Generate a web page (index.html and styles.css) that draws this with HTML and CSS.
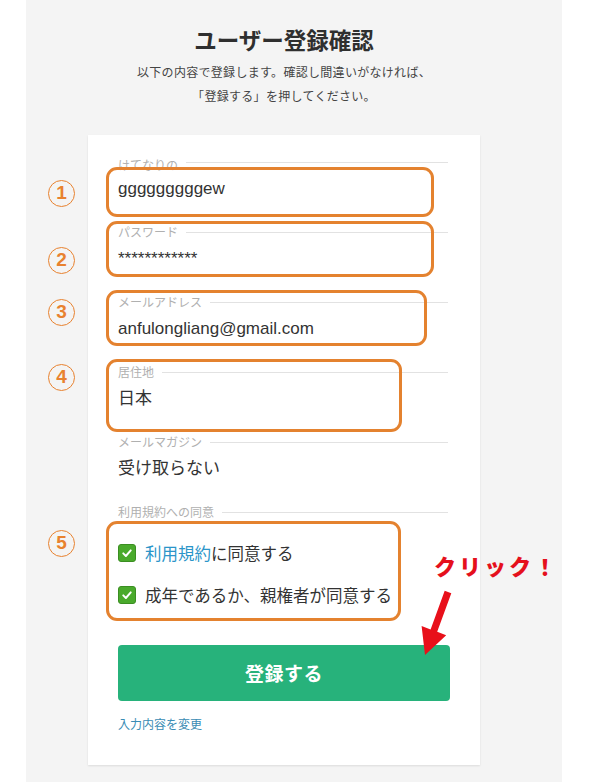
FILE: index.html
```html
<!DOCTYPE html>
<html lang="ja">
<head>
<meta charset="utf-8">
<title>ユーザー登録確認</title>
<link rel="stylesheet" href="styles.css">
</head>
<body>
<div class="panel">
  <div class="column">
    <header class="head">
      <h1 class="title">ユーザー登録確認</h1>
      <p class="lead">以下の内容で登録します。確認し間違いがなければ、<br>「登録する」を押してください。</p>
    </header>
    <main class="card">
      <div class="field">
        <div class="label low"><span>けてなりの</span></div>
        <div class="value">gggggggggew</div>
      </div>
      <div class="field">
        <div class="label"><span>パスワード</span></div>
        <div class="value">************</div>
      </div>
      <div class="field">
        <div class="label"><span>メールアドレス</span></div>
        <div class="value">anfulongliang@gmail.com</div>
      </div>
      <div class="field">
        <div class="label"><span>居住地</span></div>
        <div class="value">日本</div>
      </div>
      <div class="field">
        <div class="label"><span>メールマガジン</span></div>
        <div class="value">受け取らない</div>
      </div>
      <div class="field field-last">
        <div class="label"><span>利用規約への同意</span></div>
        <ul class="checks">
          <li class="check-row"><span class="checkbox"><svg viewBox="0 0 16 16" width="12" height="12"><path d="M3 8.5 L6.5 12 L13 4.5" fill="none" stroke="#fff" stroke-width="2.6" stroke-linecap="round" stroke-linejoin="round"/></svg></span><span><a class="link-blue" href="#">利用規約</a>に同意する</span></li>
          <li class="check-row"><span class="checkbox"><svg viewBox="0 0 16 16" width="12" height="12"><path d="M3 8.5 L6.5 12 L13 4.5" fill="none" stroke="#fff" stroke-width="2.6" stroke-linecap="round" stroke-linejoin="round"/></svg></span><span>成年であるか、親権者が同意する</span></li>
        </ul>
      </div>
      <button class="submit" type="button">登録する</button>
      <a class="back" href="#">入力内容を変更</a>
    </main>
  </div>
</div>

<div class="annot">
  <div class="abox b1"></div>
  <div class="abox b2"></div>
  <div class="abox b3"></div>
  <div class="abox b4"></div>
  <div class="abox b5"></div>
  <span class="num n1">1</span>
  <span class="num n2">2</span>
  <span class="num n3">3</span>
  <span class="num n4">4</span>
  <span class="num n5">5</span>
  <span class="click">クリック！</span>
  <svg class="arrow" width="601" height="782" viewBox="0 0 601 782">
    <polygon points="444.7,590.8 451.3,593.2 437.2,631.8 446.2,635.2 425,655 421.6,626.0 430.6,629.4" fill="#e8101a"/>
  </svg>
</div>
</body>
</html>
```

FILE: styles.css
```css
* { box-sizing: border-box; }
html, body { margin: 0; padding: 0; }
body {
  position: relative;
  background: #ffffff;
  font-family: "Noto Sans CJK JP", "Liberation Sans", sans-serif;
  color: #333;
  width: 601px;
  height: 782px;
  overflow: hidden;
}
.panel {
  margin-left: 26px;
  width: 536px;
  height: 782px;
  background: #f4f4f4;
}
.column {
  margin-left: 62px;
  width: 392px;
}
.head {
  padding-top: 24px;
  text-align: center;
}
.title {
  margin: 0;
  font-size: 22.5px;
  line-height: 30px;
  font-weight: 700;
  color: #2f2f2f;
}
.lead {
  margin: 6px 0 0;
  font-size: 12px;
  line-height: 24px;
  letter-spacing: 0.3px;
  color: #444;
}
.card {
  margin-top: 27px;
  background: #fff;
  padding: 20px 32px 33px 30px;
  box-shadow: 0 1px 2px rgba(0,0,0,0.1);
}
.field { margin-bottom: 24px; }
.field-last { margin-bottom: 0; }
.label {
  display: flex;
  align-items: center;
  gap: 8px;
  height: 14px;
  font-size: 12px;
  line-height: 14px;
  color: #b0b0b0;
}
.label::after {
  content: "";
  flex: 1;
  height: 1px;
  background: #e2e2e2;
}
.label.low span {
  align-self: flex-start;
  margin-top: 3px;
}
.value {
  margin-top: 8px;
  font-family: "Liberation Sans", "Noto Sans CJK JP", sans-serif;
  font-size: 17px;
  line-height: 24px;
  color: #333;
}
.checks {
  list-style: none;
  margin: 21px 0 0;
  padding: 0;
  display: flex;
  flex-direction: column;
  gap: 16px;
}
.check-row {
  display: flex;
  align-items: center;
  gap: 9px;
  height: 26px;
  font-size: 16.5px;
  color: #333;
}
.checkbox {
  width: 18px;
  height: 18px;
  border-radius: 3px;
  background: #4aaa2c;
  border: 1px solid #3b8e22;
  display: flex;
  align-items: center;
  justify-content: center;
}
.link-blue { color: #2b95c9; text-decoration: none; }
.submit {
  display: block;
  width: 332px;
  height: 56px;
  margin-top: 37px;
  border: 0;
  border-radius: 4px;
  background: #27b27b;
  color: #fff;
  font-family: "Noto Sans CJK JP", sans-serif;
  font-size: 19px;
  line-height: 52px;
  font-weight: 700;
  letter-spacing: 0.5px;
  padding: 0;
}
.back {
  display: block;
  margin-top: 15px;
  font-size: 12px;
  line-height: 16px;
  color: #3a8cb4;
  text-decoration: none;
}
.annot { position: absolute; left: 0; top: 0; width: 601px; height: 782px; pointer-events: none; }
.abox {
  position: absolute;
  border: 3px solid #e4822f;
  border-radius: 11px;
}
.b1 { left: 106px; top: 167px; width: 328px; height: 50px; }
.b2 { left: 106px; top: 221px; width: 328px; height: 56px; }
.b3 { left: 106px; top: 290px; width: 321px; height: 56px; }
.b4 { left: 106px; top: 359px; width: 296px; height: 73px; }
.b5 { left: 106px; top: 521px; width: 295px; height: 100px; }
.num {
  position: absolute;
  left: 48px;
  width: 27px;
  height: 27px;
  border: 1.8px solid #e8822f;
  border-radius: 50%;
  color: #e8822f;
  font-family: "Liberation Sans", sans-serif;
  font-weight: 700;
  font-size: 19px;
  line-height: 24px;
  text-align: center;
}
.n1 { top: 180px; }
.n2 { top: 247px; }
.n3 { top: 299px; }
.n4 { top: 364px; }
.n5 { top: 530px; }
.click {
  position: absolute;
  left: 434px;
  top: 550px;
  font-family: "Noto Sans CJK JP", sans-serif;
  font-size: 22px;
  line-height: 30px;
  font-weight: 900;
  letter-spacing: 3px;
  color: #e5101c;
}
.arrow { position: absolute; left: 0; top: 0; }
```
